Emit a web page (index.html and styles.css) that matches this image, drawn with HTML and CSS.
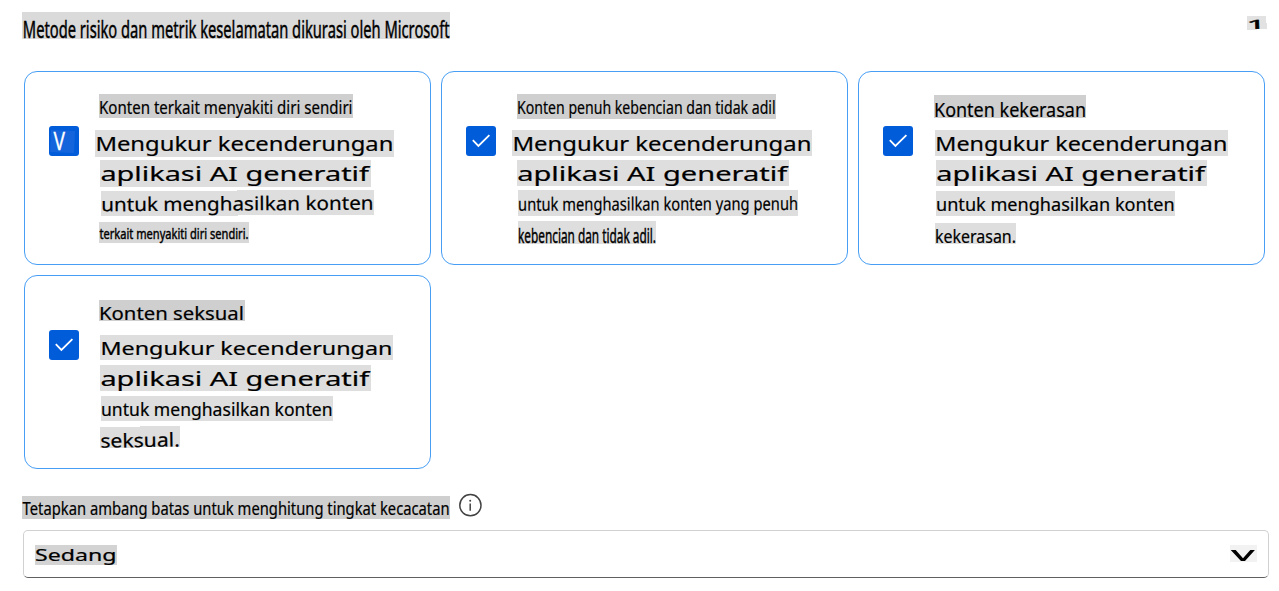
FILE: index.html
```html
<!DOCTYPE html>
<html lang="id">
<head>
<meta charset="utf-8">
<title>Metrik keselamatan</title>
<link rel="stylesheet" href="styles.css">
</head>
<body>
<header class="header">
  <svg class="strip title dense" width="428" height="27"><text x="0.8" y="26" font-size="23" textLength="426.8" lengthAdjust="spacingAndGlyphs">Metode risiko dan metrik keselamatan dikurasi oleh Microsoft</text></svg>
  <svg class="strip toggle" width="20" height="15"><text transform="translate(-.4 13.2) rotate(-2) scale(2.75 1)" font-size="12.6">1</text></svg>
</header>
<main class="cards">
  <section class="card">
    <span class="box"><svg class="patch" width="26" height="23"><text x="3.5" y="20.4" font-size="26" textLength="11.5" lengthAdjust="spacingAndGlyphs">V</text></svg></span>
    <div class="copy self-harm">
      <svg class="strip name" width="254" height="24"><text x="0" y="19.8" font-size="17.8" textLength="253.5" lengthAdjust="spacingAndGlyphs">Konten terkait menyakiti diri sendiri</text></svg>
      <svg class="strip" width="299" height="27"><text x="0.4" y="21" font-size="19.5" textLength="298" lengthAdjust="spacingAndGlyphs">Mengukur kecenderungan</text></svg>
      <svg class="strip" width="271" height="27"><text x="0.4" y="21" font-size="19.3" textLength="268.6" lengthAdjust="spacingAndGlyphs">aplikasi AI generatif</text></svg>
      <svg class="strip tilt" width="273" height="26"><text x="0" y="21.3" font-size="19" textLength="272.5" lengthAdjust="spacingAndGlyphs" transform="rotate(-.35)">untuk menghasilkan konten</text></svg>
      <svg class="strip dense" width="150" height="21"><text x="0.5" y="17" font-size="15" textLength="149" lengthAdjust="spacingAndGlyphs">terkait menyakiti diri sendiri.</text></svg>
    </div>
  </section>
  <section class="card">
    <span class="box"><svg class="check" width="30" height="30"><path d="M6.8 14.2l5.6 5.8L23.4 9.2"/></svg></span>
    <div class="copy hate">
      <svg class="strip name" width="259" height="25"><text x="0" y="20" font-size="18" textLength="258.6" lengthAdjust="spacingAndGlyphs">Konten penuh kebencian dan tidak adil</text></svg>
      <svg class="strip" width="300" height="26"><text x="0.4" y="20.5" font-size="19.3" textLength="299" lengthAdjust="spacingAndGlyphs">Mengukur kecenderungan</text></svg>
      <svg class="strip" width="272" height="26"><text x="0.2" y="20.9" font-size="19" textLength="270" lengthAdjust="spacingAndGlyphs">aplikasi AI generatif</text></svg>
      <svg class="strip" width="280" height="26"><text x="0" y="20.8" font-size="18.3" textLength="280" lengthAdjust="spacingAndGlyphs" transform="rotate(-.15)">untuk menghasilkan konten yang penuh</text></svg>
      <svg class="strip dense" width="138" height="23"><text x="0" y="22.3" font-size="19.8" textLength="138" lengthAdjust="spacingAndGlyphs">kebencian dan tidak adil.</text></svg>
    </div>
  </section>
  <section class="card">
    <span class="box"><svg class="check" width="30" height="30"><path d="M6.8 14.2l5.6 5.8L23.4 9.2"/></svg></span>
    <div class="copy violence">
      <svg class="strip name" width="152" height="23"><text x="0" y="22" font-size="20" textLength="152" lengthAdjust="spacingAndGlyphs">Konten kekerasan</text></svg>
      <svg class="strip" width="293" height="26"><text x="0.3" y="20.5" font-size="19" textLength="292" lengthAdjust="spacingAndGlyphs">Mengukur kecenderungan</text></svg>
      <svg class="strip" width="271" height="26"><text x="0.2" y="20.9" font-size="19" textLength="268.8" lengthAdjust="spacingAndGlyphs">aplikasi AI generatif</text></svg>
      <svg class="strip" width="239" height="25"><text x="0" y="20" font-size="18" textLength="238.6" lengthAdjust="spacingAndGlyphs">untuk menghasilkan konten</text></svg>
      <svg class="strip" width="81" height="21"><text x="0" y="20" font-size="18" textLength="81" lengthAdjust="spacingAndGlyphs">kekerasan.</text></svg>
    </div>
  </section>
  <section class="card">
    <span class="box"><svg class="check" width="30" height="30"><path d="M6.8 14.2l5.6 5.8L23.4 9.2"/></svg></span>
    <div class="copy sexual">
      <svg class="strip name" width="146" height="21"><text x="0" y="20" font-size="18.2" textLength="145" lengthAdjust="spacingAndGlyphs">Konten seksual</text></svg>
      <svg class="strip" width="293" height="25"><text x="0.4" y="19.7" font-size="18.3" textLength="292" lengthAdjust="spacingAndGlyphs">Mengukur kecenderungan</text></svg>
      <svg class="strip" width="271" height="26"><text x="0.4" y="20.8" font-size="19" textLength="268.8" lengthAdjust="spacingAndGlyphs">aplikasi AI generatif</text></svg>
      <svg class="strip" width="232" height="25"><text x="0" y="19.7" font-size="17.3" textLength="231.5" lengthAdjust="spacingAndGlyphs">untuk menghasilkan konten</text></svg>
      <svg class="strip step" width="80" height="23"><text x="0" y="21.8" font-size="19" textLength="79.5" lengthAdjust="spacingAndGlyphs" transform="rotate(-1)">seksual.</text></svg>
    </div>
  </section>
</main>
<div class="label">
  <svg class="strip name" width="428" height="23"><text x="0.6" y="18.6" font-size="17.3" textLength="427" lengthAdjust="spacingAndGlyphs">Tetapkan ambang batas untuk menghitung tingkat kecacatan</text></svg>
  <svg class="info" width="24" height="24"><circle cx="12.4" cy="12.2" r="10.6"/><path d="M12.2 10.5v7.3"/><circle class="dot" cx="12.2" cy="7.7" r="1"/></svg>
</div>
<div class="select">
  <svg class="strip value" width="82" height="20"><text x="0" y="15.9" font-size="15.5" textLength="81.5" lengthAdjust="spacingAndGlyphs">Sedang</text></svg>
  <svg class="chevron" width="27" height="17"><path d="M.7 5h5l7.3 8.3L20.3 5h4.6L15 16h-4z"/></svg>
</div>
</body>
</html>
```
FILE: styles.css
```css
body {
  margin: 0;
  padding: 12px 10px 0 22px;
  background: #fff;
  font-family: "Noto Sans", sans-serif;
}
svg { display: block; flex: none; }
.strip { background: #dedede; fill: #000; stroke: #000; stroke-width: .2; overflow: visible; }
.dense { stroke-width: .45; }
.name { background: #cfcfcf; }
.header {
  display: flex;
  justify-content: space-between;
  align-items: flex-start;
  height: 59px;
}
.title { background: #dadada; }
.toggle {
  margin: 4px 2px 0 0;
  background: #e2e2e2;
  stroke-width: .35;
  clip-path: polygon(0 0, 19px 0, 19px 7px, 20px 7px, 20px 13px, 10px 13px, 10px 14px, 0 14px);
}
.cards {
  display: grid;
  grid-template-columns: repeat(3, 407px);
  grid-auto-rows: 194px;
  gap: 10px;
  margin-left: 2px;
}
.card {
  box-sizing: border-box;
  display: flex;
  gap: 16px;
  padding-left: 24px;
  border: 1px solid #479ef5;
  border-radius: 13px;
}
.box {
  flex: none;
  width: 30px;
  height: 30px;
  margin-top: 54px;
  border-radius: 3px;
  background: #015cda;
}
.patch { margin: 4px 0 0 1px; background: #1464dc; fill: #fff; stroke: #fff; stroke-width: .3; overflow: visible; clip-path: polygon(1px 0, 25px 1px, 24px 23px, 0 22px); }
.check path { fill: none; stroke: #fff; stroke-width: 1.8; }
.copy { display: flex; flex-direction: column; }
.self-harm :nth-child(1) { margin: 22px 0 0 4px; }
.self-harm :nth-child(2) { margin: 12px 0 0; }
.self-harm :nth-child(3) { margin: 3px 0 0 5px; }
.self-harm :nth-child(4) { margin: 3px 0 0 6px; }
.self-harm :nth-child(5) { margin: 6px 0 0 4px; background: #d8d8d8; }
.hate :nth-child(1) { margin: 22px 0 0 5px; }
.hate :nth-child(2) { margin: 11px 0 0; }
.hate :nth-child(3) { margin: 4px 0 0 5px; }
.hate :nth-child(4) { margin: 4px 0 0 6px; }
.hate :nth-child(5) { margin: 5px 0 0 6px; }
.violence :nth-child(1) { margin: 23px 0 0 5px; }
.violence :nth-child(2) { margin: 12px 0 0 6px; }
.violence :nth-child(3) { margin: 4px 0 0 7px; }
.violence :nth-child(4) { margin: 5px 0 0 7px; }
.violence :nth-child(5) { margin: 7px 0 0 6px; }
.sexual :nth-child(1) { margin: 24px 0 0 4px; }
.sexual :nth-child(2) { margin: 14px 0 0 5px; }
.sexual :nth-child(3) { margin: 5px 0 0 5px; }
.sexual :nth-child(4) { margin: 5px 0 0 6px; }
.sexual :nth-child(5) { margin: 5px 0 0 5px; }
.tilt { clip-path: polygon(0 1px, 136px 1px, 136px 0, 100% 0, 100% 25px, 137px 25px, 137px 26px, 0 26px); }
.step { clip-path: polygon(0 1px, 40px 1px, 40px 0, 100% 0, 100% 21px, 40px 21px, 40px 22px, 0 22px); }
.label { display: flex; gap: 8px; margin-top: 24px; height: 37px; align-items: flex-start; }
.label .name { margin-top: 3px; }
.info { fill: none; stroke: #424242; stroke-width: 1.5; }
.info .dot { fill: #424242; stroke: none; }
.select {
  box-sizing: border-box;
  display: flex;
  justify-content: space-between;
  align-items: flex-start;
  width: 1246px;
  height: 48px;
  margin-left: 1px;
  padding: 14px 11px 0;
  border: 1px solid #d1d1d1;
  border-bottom-color: #616161;
  border-radius: 5px;
}
.value { background: #d3d3d3; }
.chevron { background: #f2f2f2; }
```
